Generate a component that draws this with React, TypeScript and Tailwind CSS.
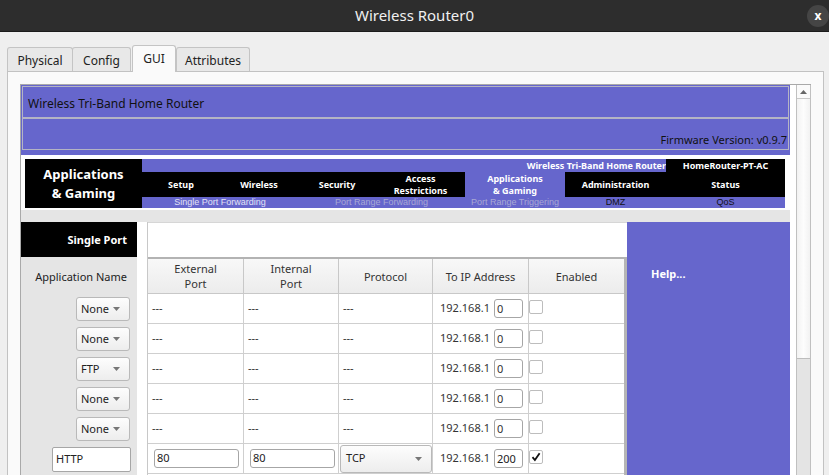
import React from "react";

const rows = [
  { app: "None" },
  { app: "None" },
  { app: "FTP" },
  { app: "None" },
  { app: "None" },
];

function Arrow() {
  return (
    <svg width="7" height="4" viewBox="0 0 7 4">
      <path d="M0 0h7L3.5 4z" fill="#777" />
    </svg>
  );
}

function Tab({ label, active, w }: { label: string; active?: boolean; w: string }) {
  if (active)
    return (
      <div className={`${w} h-[27px] -mb-px relative z-10 flex items-start justify-center pt-[4px] bg-[#fafafa] border border-b-0 border-[#c4c4c4] rounded-t-[3px]`}>
        {label}
      </div>
    );
  return (
    <div className={`${w} h-[24px] flex items-center justify-center pt-[2px] bg-[#e8e8e8] border border-b-0 border-[#c4c4c4] rounded-t-[3px]`}>
      {label}
    </div>
  );
}

function Select({ value }: { value: string }) {
  return (
    <div className="w-[54px] h-[24px] flex items-center justify-between pl-[4px] pr-[9px] rounded-[3px] border border-[#b9b9b9] bg-gradient-to-b from-[#fdfdfd] to-[#ededed]">
      <span>{value}</span>
      <Arrow />
    </div>
  );
}

function NavCell({ w, children, active }: { w: string; children: React.ReactNode; active?: boolean }) {
  return (
    <div className={`${w} h-full flex items-center justify-center text-center leading-[12px] ${active ? "bg-[#6666cc]" : "bg-black"}`}>
      {children}
    </div>
  );
}

export default function App() {
  return (
    <div className="w-[829px] h-[475px] overflow-hidden bg-[#efefef] flex flex-col font-['Noto_Sans',sans-serif] text-[#222]">
      {/* title bar */}
      <div className="relative h-8 shrink-0 bg-[#2d2d2d] border-b border-[#1b1b1b] flex items-center justify-center">
        <span className="text-[15px] text-[#f0f0f0]">Wireless Router0</span>
        <div className="absolute right-[0px] top-[5px] w-[22px] h-[22px] rounded-full bg-[#454545] flex items-center justify-center text-white text-[12px] font-bold">
          x
        </div>
      </div>

      {/* tabs */}
      <div className="h-[39px] shrink-0 flex items-end pl-[7px] text-[12px] text-[#222]">
        <Tab label="Physical" w="w-[66px]" />
        <Tab label="Config" w="w-[59px] -ml-px" />
        <div className="w-[1px]" />
        <Tab label="GUI" w="w-[44px]" active />
        <Tab label="Attributes" w="w-[74px]" />
      </div>

      {/* panel */}
      <div className="flex-1 min-h-0 ml-[7px] mr-[5px] border-l border-t border-r border-[#c2c2c2] bg-[#fafafa] pt-[12px] pl-[12px] pr-[12px] flex">
        <div className="flex-1 min-h-0 border-l border-t border-[#a9a9a9] bg-white flex overflow-hidden">
          {/* page */}
          <div className="w-[769px] shrink-0 flex flex-col text-[11px]">
            {/* header */}
            <div className="h-[70px] bg-[#6666cc] pt-px px-px pb-[5px]">
              <div className="h-full border border-[#b4b4c4] flex flex-col">
                <div className="h-[32px] border-b-2 border-[#b4b4c4] flex items-center pl-[5px] pt-[3px] text-[12px] text-[#111]">
                  Wireless Tri-Band Home Router
                </div>
                <div className="flex-1 flex items-end justify-end pr-[1px] pb-[1px] text-[#111]">
                  Firmware Version: v0.9.7
                </div>
              </div>
            </div>
            <div className="h-[4px]" />

            {/* nav */}
            <div className="h-[49px] flex pl-[4px] pr-[5px] text-white font-bold">
              <div className="w-[117px] bg-black flex items-center justify-center text-center text-[13px] leading-[19px]">
                Applications
                <br />
                &amp; Gaming
              </div>
              <div className="flex-1 flex flex-col text-[9px]">
                <div className="h-[13px] flex leading-[13px]">
                  <div className="flex-1 bg-[#6666cc] text-right">Wireless Tri-Band Home Router</div>
                  <div className="w-[119px] bg-black text-center">HomeRouter-PT-AC</div>
                </div>
                <div className="h-[25px] flex">
                  <NavCell w="w-[78px]">Setup</NavCell>
                  <NavCell w="w-[78px]">Wireless</NavCell>
                  <NavCell w="w-[78px]">Security</NavCell>
                  <NavCell w="w-[89px]">
                    Access
                    <br />
                    Restrictions
                  </NavCell>
                  <NavCell w="w-[100px]" active>
                    Applications
                    <br />
                    &amp; Gaming
                  </NavCell>
                  <NavCell w="w-[101px]">Administration</NavCell>
                  <NavCell w="w-[119px]">Status</NavCell>
                </div>
                <div className="h-[11px] flex bg-[#6666cc] font-normal font-['Liberation_Sans',sans-serif] text-[9px] leading-[11px]">
                  <div className="w-[156px] text-center text-[#e2e2f6]">Single Port Forwarding</div>
                  <div className="w-[167px] text-center text-[#a9a9d4]">Port Range Forwarding</div>
                  <div className="w-[100px] text-center text-[#a9a9d4]">Port Range Triggering</div>
                  <div className="w-[101px] text-center text-[#111]">DMZ</div>
                  <div className="w-[119px] text-center text-[#111]">QoS</div>
                </div>
              </div>
            </div>
            <div className="h-[2px]" />
            <div className="h-[12px] bg-[#e5e5e5]" />

            {/* content */}
            <div className="flex-1 flex">
              {/* left labels */}
              <div className="w-[116px] bg-[#e5e5e5] flex flex-col">
                <div className="h-[35px] bg-black text-white font-bold flex items-center justify-end pr-[10px] pt-[2px]">
                  Single Port
                </div>
                <div className="h-[2px]" />
                <div className="h-[35px] flex items-center justify-end pr-[10px] pt-[2px]">Application Name</div>
                {rows.map((r, i) => (
                  <div key={i} className="h-[30px] flex items-center justify-end pr-[7px]">
                    <Select value={r.app} />
                  </div>
                ))}
                <div className="h-[30px] flex items-center justify-end pr-[6px]">
                  <div className="w-[79px] h-[25px] border border-[#a6a6a6] rounded-[2px] bg-white flex items-center pl-[3px]">
                    HTTP
                  </div>
                </div>
              </div>
              <div className="w-[10px] bg-white" />

              {/* table */}
              <div className="w-[480px] flex flex-col border-l border-[#c8c8c8]">
                <div className="h-[37px] bg-white border-t border-b-2 border-t-[#d6d6d6] border-b-[#b3b3b3]" />
                <div className="flex-1 flex">
                  <div className="w-[476px] flex flex-col bg-white text-[#333]">
                    <div className="h-[35px] grid grid-cols-[96px_95px_94px_96px_95px] bg-gradient-to-b from-[#f8f8f8] to-[#ececec] border-b border-[#c8c8c8] text-center leading-[15px]">
                      <div className="border-r border-[#c8c8c8] flex items-center justify-center">
                        External
                        <br />
                        Port
                      </div>
                      <div className="border-r border-[#c8c8c8] flex items-center justify-center">
                        Internal
                        <br />
                        Port
                      </div>
                      <div className="border-r border-[#c8c8c8] flex items-center justify-center">Protocol</div>
                      <div className="border-r border-[#c8c8c8] flex items-center justify-center">To IP Address</div>
                      <div className="flex items-center justify-center">Enabled</div>
                    </div>
                    {rows.map((_, i) => (
                      <div key={i} className="h-[30px] grid grid-cols-[96px_95px_94px_96px_95px] border-b border-[#cfcfcf]">
                        <div className="border-r border-[#cfcfcf] flex items-center pl-[4px]">---</div>
                        <div className="border-r border-[#cfcfcf] flex items-center pl-[4px]">---</div>
                        <div className="border-r border-[#cfcfcf] flex items-center pl-[4px]">---</div>
                        <div className="border-r border-[#cfcfcf] flex items-center pl-[7px]">
                          <span className="w-[54px] shrink-0">192.168.1</span>
                          <div className="w-[29px] h-[19px] border border-[#a6a6a6] rounded-[3px] flex items-center pl-[2px] leading-none">0</div>
                        </div>
                        <div className="flex items-start pt-[6px]">
                          <div className="w-[14px] h-[14px] border border-[#bdbdbd] rounded-[2px] bg-white" />
                        </div>
                      </div>
                    ))}
                    <div className="h-[30px] grid grid-cols-[96px_95px_94px_96px_95px] border-b border-[#cfcfcf]">
                      <div className="border-r border-[#cfcfcf] flex items-center pl-[6px]">
                        <div className="w-[85px] h-[19px] border border-[#a6a6a6] rounded-[3px] flex items-center pl-[2px] text-[#222]">80</div>
                      </div>
                      <div className="border-r border-[#cfcfcf] flex items-center pl-[6px]">
                        <div className="w-[85px] h-[19px] border border-[#a6a6a6] rounded-[3px] flex items-center pl-[2px] text-[#222]">80</div>
                      </div>
                      <div className="border-r border-[#cfcfcf] flex items-center pl-[1px]">
                        <div className="w-[93px] h-[28px] border border-[#b9b9b9] rounded-[3px] bg-gradient-to-b from-[#fdfdfd] to-[#ededed] flex items-center justify-between pl-[5px] pr-[9px] text-[#222]">
                          <span>TCP</span>
                          <Arrow />
                        </div>
                      </div>
                      <div className="border-r border-[#cfcfcf] flex items-center pl-[7px]">
                        <span className="w-[54px] shrink-0">192.168.1</span>
                        <div className="w-[29px] h-[19px] border border-[#a6a6a6] rounded-[3px] flex items-center pl-[2px] leading-none text-[#222]">200</div>
                      </div>
                      <div className="flex items-start pt-[6px]">
                        <div className="w-[14px] h-[14px] border border-[#bdbdbd] rounded-[2px] bg-white flex items-center justify-center">
                          <svg width="10" height="10" viewBox="0 0 10 10">
                            <path d="M1.5 5.2l2.4 2.8L8.6 1.2" stroke="#111" strokeWidth="1.8" fill="none" />
                          </svg>
                        </div>
                      </div>
                    </div>
                  </div>
                  <div className="w-[3px] bg-[#b5b5b5]" />
                </div>
              </div>

              {/* help */}
              <div className="flex-1 bg-[#6666cc] pl-[24px] pt-[44px] text-white font-bold text-[11px]">Help...</div>
            </div>
          </div>
          <div className="w-[6px]" />

          {/* scrollbar */}
          <div className="w-[15px] shrink-0 flex flex-col border-l border-r border-[#c0c0c0] bg-[#fafafa]">
            <div className="h-[14px] border-b border-[#c8c8c8] flex items-center justify-center">
              <svg width="7" height="4" viewBox="0 0 7 4">
                <path d="M0 4h7L3.5 0z" fill="#666" />
              </svg>
            </div>
            <div className="h-[260px] bg-gradient-to-r from-[#f2f2f2] via-[#fdfdfd] to-[#f2f2f2] border-b border-[#bdbdbd]" />
            <div className="flex-1 bg-[#e4e4e4]" />
          </div>
        </div>
      </div>
    </div>
  );
}
